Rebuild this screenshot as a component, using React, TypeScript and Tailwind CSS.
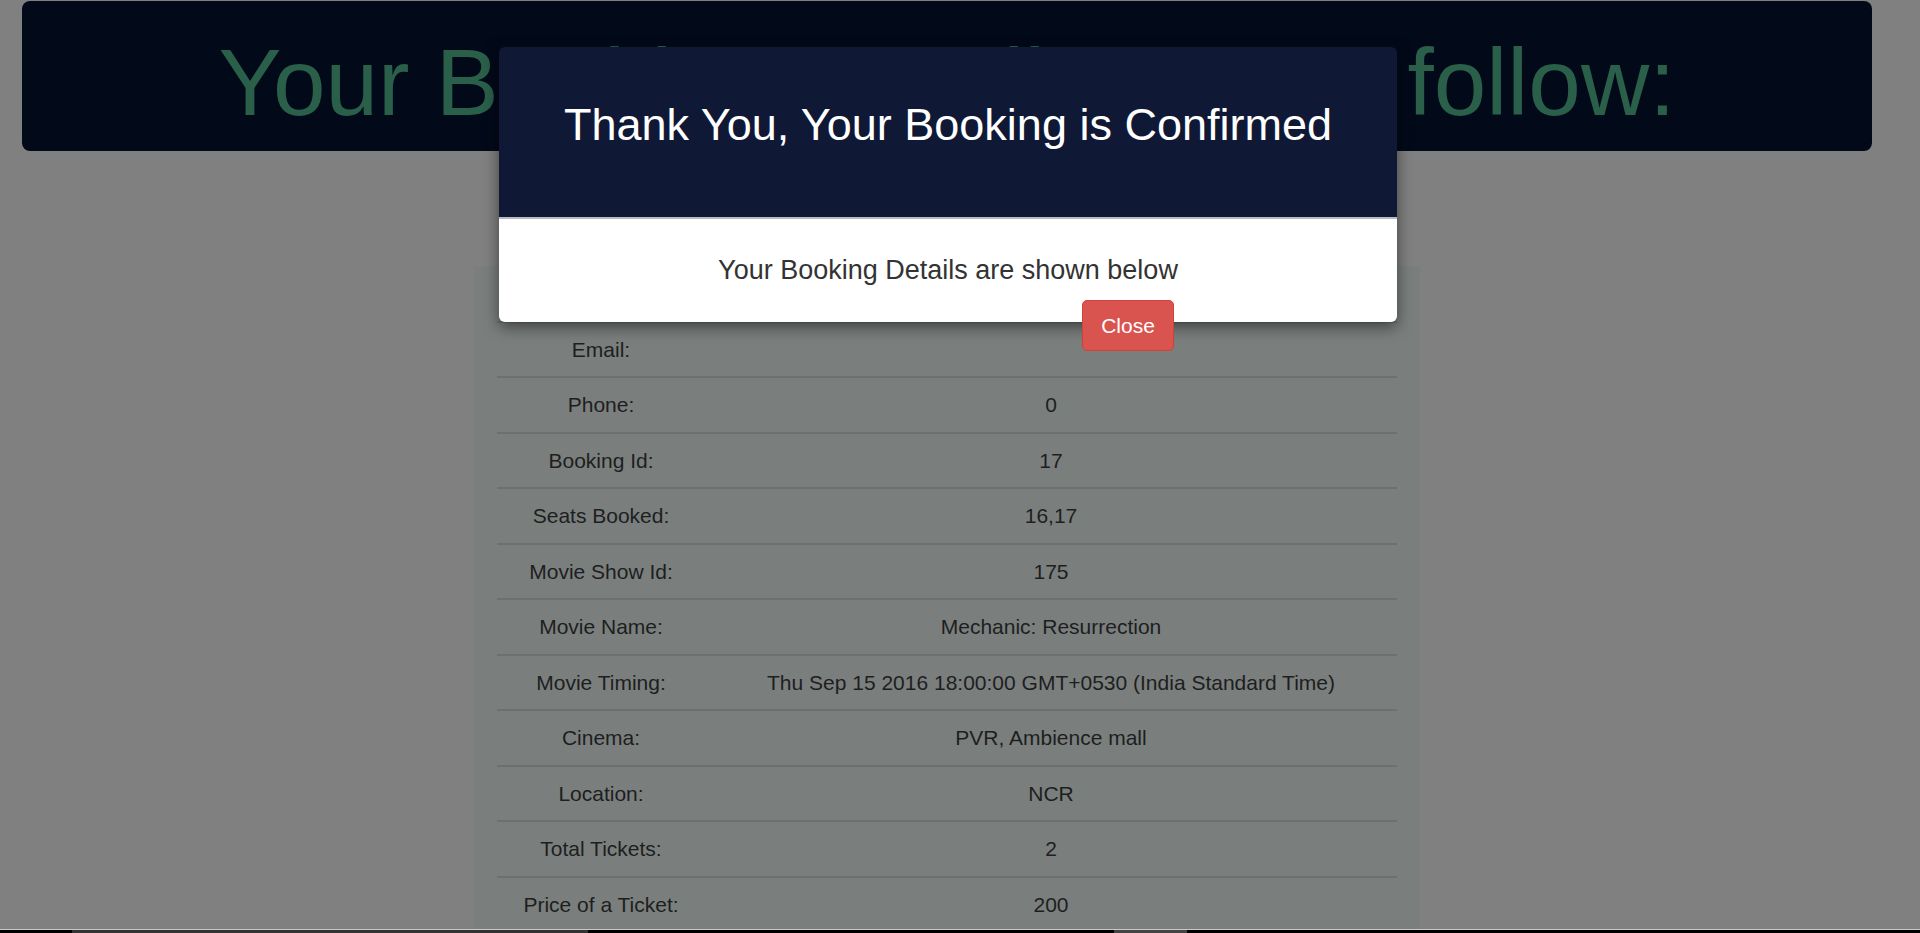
const rows: [string, string][] = [
  ['Name:', ''],
  ['Email:', ''],
  ['Phone:', '0'],
  ['Booking Id:', '17'],
  ['Seats Booked:', '16,17'],
  ['Movie Show Id:', '175'],
  ['Movie Name:', 'Mechanic: Resurrection'],
  ['Movie Timing:', 'Thu Sep 15 2016 18:00:00 GMT+0530 (India Standard Time)'],
  ['Cinema:', 'PVR, Ambience mall'],
  ['Location:', 'NCR'],
  ['Total Tickets:', '2'],
  ['Price of a Ticket:', '200'],
]

function BookingTable() {
  return (
    <div className="ml-[474px] mt-[115px] h-[663px] w-[946px] overflow-hidden bg-[#7a7f7e] px-[23px]">
      <table className="w-[900px] border-collapse text-[21px] text-[#1e1e1e]">
        <tbody>
          {rows.map(([label, value], i) => (
            <tr key={label} className={i === 0 ? 'h-[55.5px]' : 'h-[55.5px] border-t-2 border-[#6c706f]'}>
              <td className="w-[208px] text-center align-middle">{label}</td>
              <td className="text-center align-middle">{value}</td>
            </tr>
          ))}
        </tbody>
      </table>
    </div>
  )
}

function ConfirmModal() {
  return (
    <div className="absolute left-[499px] top-[47px] w-[898px] rounded-md shadow-[0_5px_15px_rgba(0,0,0,0.5)]">
      <div className="h-[172px] rounded-t-md border-b-2 border-[#b8bbc6] bg-[#0f1936] pt-[53px] text-center text-[45px] leading-[50px] text-white">
        Thank You, Your Booking is Confirmed
      </div>
      <div className="h-[103px] rounded-b-md bg-white pt-[36px] text-center text-[27px] leading-[30px] text-[#333333]">
        Your Booking Details are shown below
      </div>
      <button className="absolute left-[583px] top-[253px] h-[51px] w-[92px] rounded-[5px] border border-[#d43f3a] bg-[#d9534f] text-[21px] text-white">
        Close
      </button>
    </div>
  )
}

export default function App() {
  return (
    <div className="relative h-[933px] w-[1920px] overflow-hidden bg-[#808080] font-['Liberation_Sans',Arial,sans-serif]">
      <div className="ml-[22px] mt-px h-[150px] w-[1850px] rounded-lg bg-[#020a19] pt-[28px] text-center">
        <h1 className="text-[94.5px] leading-[106px] text-[#2a5f4a]">Your Booking Details are as follow:</h1>
      </div>
      <BookingTable />
      <div className="border-t border-[#c8c8c8]">
        <div className="flex h-[3px] bg-black">
          <div className="ml-[72px] w-[516px] bg-[#333333]" />
          <div className="ml-[526px] w-[73px] bg-[#444444]" />
        </div>
      </div>
      <ConfirmModal />
    </div>
  )
}
